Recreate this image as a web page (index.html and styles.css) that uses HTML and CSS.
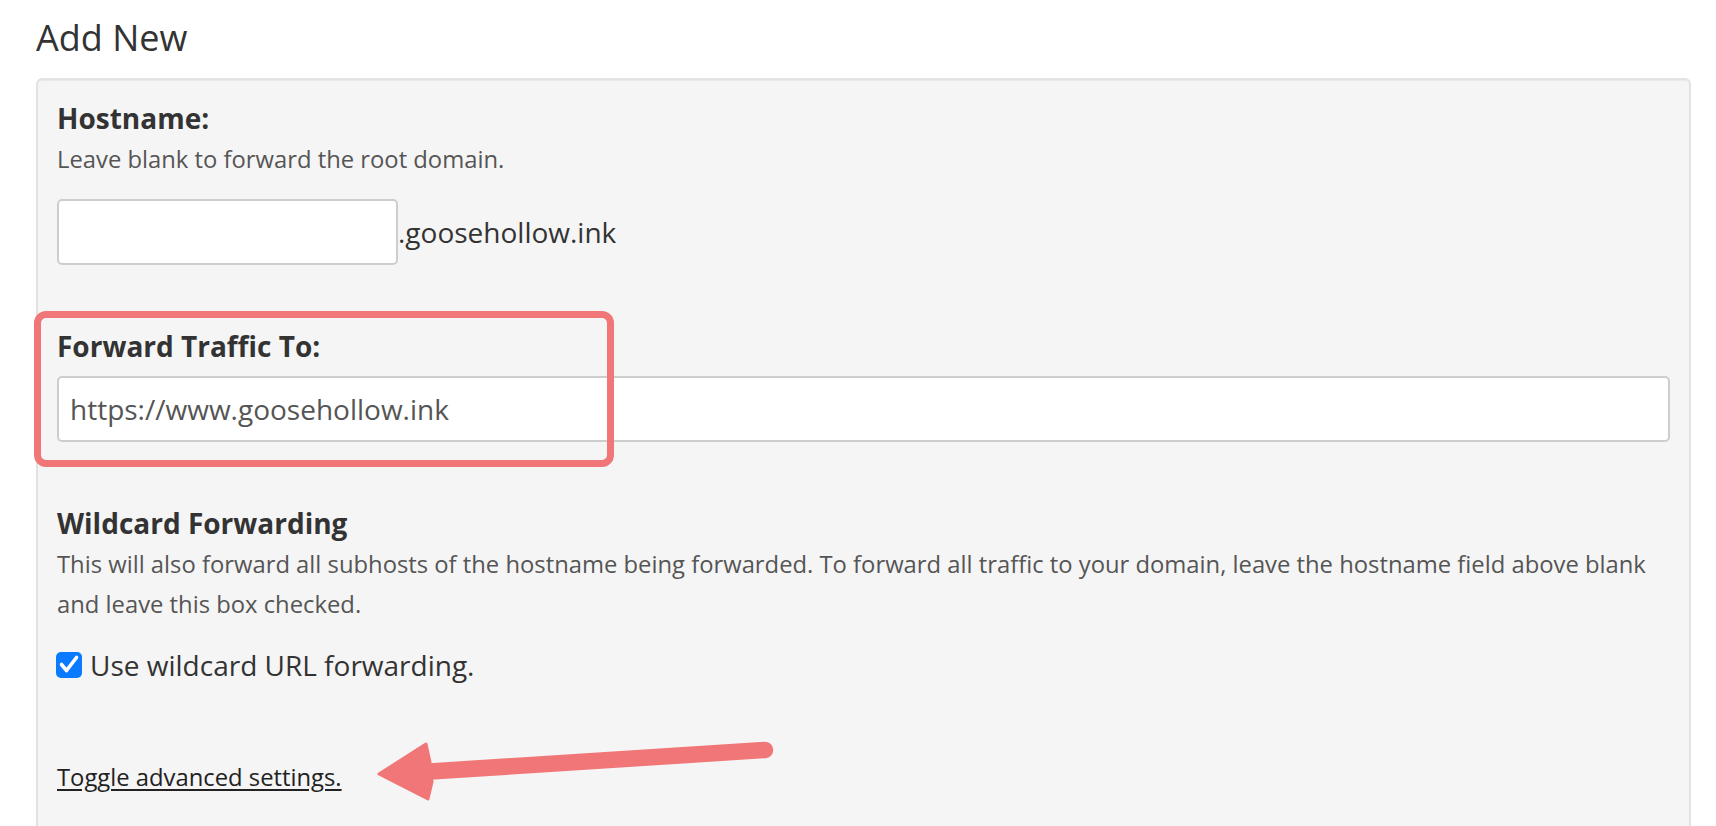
FILE: index.html
```html
<!DOCTYPE html>
<html lang="en">
<head>
<meta charset="utf-8">
<title>Add New</title>
<link rel="stylesheet" href="styles.css">
</head>
<body>
<div class="page">
  <h2 class="title">Add New</h2>
  <div class="well">
    <div class="group">
      <div class="label">Hostname:</div>
      <div class="help">Leave blank to forward the root domain.</div>
      <div class="host-row">
        <input class="field host" type="text">
        <span class="suffix">.goosehollow.ink</span>
      </div>
    </div>
    <div class="group">
      <div class="label">Forward Traffic To:</div>
      <input class="field wide" type="text" value="https://www.goosehollow.ink">
    </div>
    <div class="group">
      <div class="label">Wildcard Forwarding</div>
      <div class="help">This will also forward all subhosts of the hostname being forwarded. To forward all traffic to your domain, leave the hostname field above blank<br>and leave this box checked.</div>
      <label class="check-row">
        <span class="box"><svg viewBox="0 0 26 26" width="26" height="26"><path d="M5.5 12.5 L10.5 18.5 L20.5 5.5" fill="none" stroke="#fff" stroke-width="3.6" stroke-linecap="round" stroke-linejoin="round"/></svg></span>
        <span class="check-text">Use wildcard URL forwarding.</span>
      </label>
    </div>
    <div class="toggle-row"><a class="toggle" href="#">Toggle advanced settings.</a></div>
  </div>
  <div class="highlight"></div>
  <svg class="arrow" viewBox="0 0 430 80" width="430" height="80">
    <path d="M70 41.5 L405 20" fill="none" stroke="#f07678" stroke-width="16.5" stroke-linecap="round"/>
    <path d="M19 44 L66 14 L70 32 L72 52 L68 69 Z" fill="#f07678" stroke="#f07678" stroke-width="3" stroke-linejoin="round"/>
  </svg>
</div>
</body>
</html>
```
FILE: styles.css
```css
html, body {
  margin: 0;
  padding: 0;
  background: #ffffff;
  overflow: hidden;
}
body {
  font-family: "Open Sans", "Liberation Sans", sans-serif;
  color: #333333;
}
.page {
  position: relative;
  display: flow-root;
  padding: 0 25px 0 36px;
  height: 826px;
}
.title {
  margin: 18px 0 20px;
  font-size: 36px;
  line-height: 40px;
  font-weight: 400;
  color: #333333;
}
.well {
  background: #f5f5f5;
  border: 2px solid #e3e3e3;
  border-radius: 6px;
  padding: 18px 19px 60px;
  box-shadow: inset 0 1px 1px rgba(0, 0, 0, 0.05);
}
.group {
  margin-bottom: 61px;
}
.group:last-of-type {
  margin-bottom: 0;
}
.label {
  font-size: 28px;
  line-height: 40px;
  font-weight: 700;
  color: #333333;
  margin-bottom: 1px;
}
.help {
  font-size: 23.8px;
  line-height: 40px;
  color: #555555;
}
.host-row {
  display: flex;
  align-items: center;
  margin-top: 20px;
}
.field {
  box-sizing: border-box;
  height: 66px;
  border: 2px solid #cdcdcd;
  border-radius: 5px;
  background: #ffffff;
  font-family: "Open Sans", "Liberation Sans", sans-serif;
  font-size: 28px;
  color: #555555;
  padding: 0 11px;
  margin: 0;
  outline: none;
}
.host {
  width: 341px;
}
.suffix {
  font-size: 28px;
  color: #333333;
  line-height: 40px;
}
.wide {
  display: block;
  width: 100%;
  margin-top: 10px;
}
.check-row {
  display: flex;
  align-items: center;
  gap: 8px;
  margin-top: 21px;
  line-height: 40px;
  margin-left: -1px;
}
.box {
  width: 26px;
  height: 26px;
  border-radius: 5px;
  background: #0a7bff;
  display: flex;
}
.check-text {
  font-size: 28px;
  color: #333333;
}
.toggle-row {
  margin-top: 72px;
  line-height: 40px;
}
.toggle {
  font-size: 23.8px;
  color: #222222;
  text-decoration: underline;
  text-underline-offset: 3px;
}
.highlight {
  position: absolute;
  left: 34px;
  top: 311px;
  width: 580px;
  height: 156px;
  box-sizing: border-box;
  border: 7px solid #f07678;
  border-radius: 12px;
}
.arrow {
  position: absolute;
  left: 360px;
  top: 730px;
}
```
